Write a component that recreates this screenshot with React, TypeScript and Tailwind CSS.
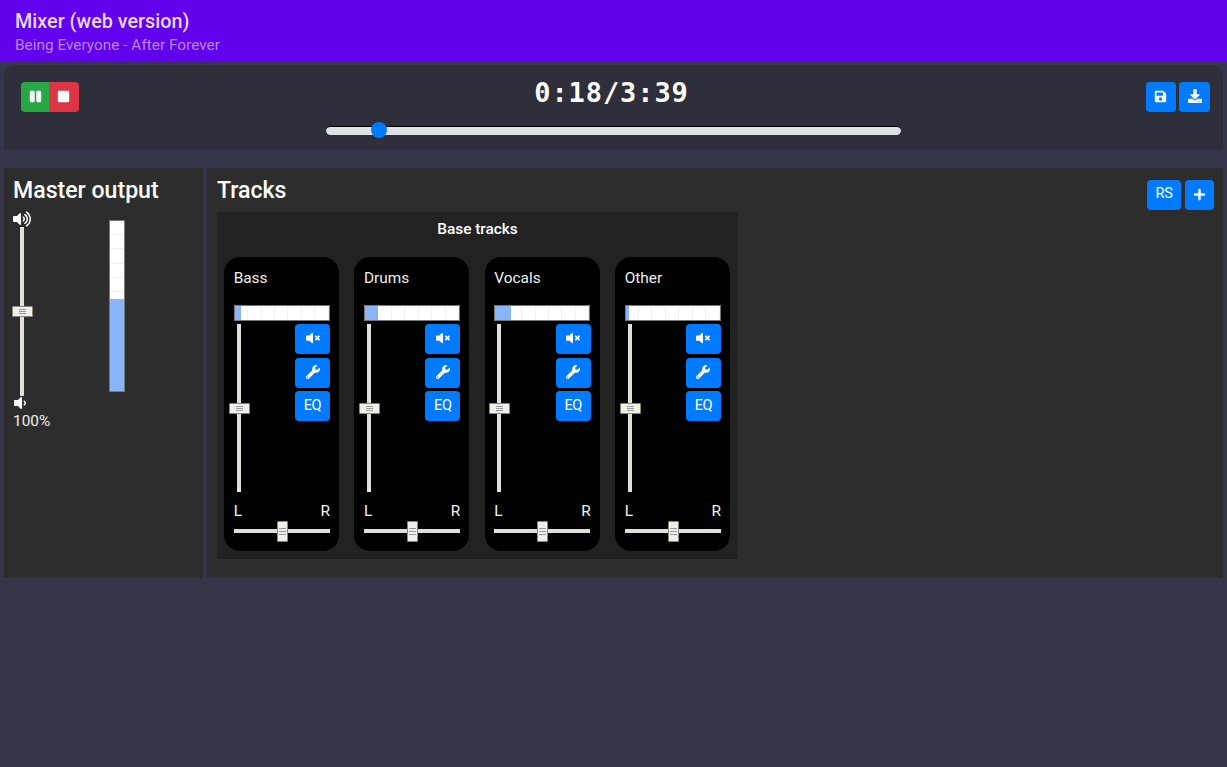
import { FaPause, FaStop, FaSave, FaDownload, FaPlus, FaWrench, FaVolumeMute, FaVolumeUp, FaVolumeDown } from "react-icons/fa";

function Grip({ vertical }: { vertical?: boolean }) {
  return (
    <div className={vertical ? "flex h-full flex-col items-center justify-center gap-[1px]" : "flex h-full flex-col items-center justify-center gap-[2px]"}>
      {[0, 1, 2].map((i) => (
        <span key={i} className="h-px w-[7px] bg-[#999]" />
      ))}
    </div>
  );
}

function Meter({ fill }: { fill: number }) {
  return (
    <div className="relative flex h-[16px] w-[96px] border border-[#777] bg-white">
      {[0, 1, 2, 3, 4, 5, 6].map((i) => (
        <div key={i} className="flex-1 border-r border-[#f0f0f0] last:border-r-0" />
      ))}
      <div className="absolute left-0 top-0 h-full bg-[#8ab4f8]" style={{ width: fill }} />
    </div>
  );
}

function IconBtn({ children }: { children: React.ReactNode }) {
  return (
    <button className="flex h-[30px] w-[35px] items-center justify-center rounded-[4px] bg-[#007bff] pb-[2px] text-[14px] text-white">
      {children}
    </button>
  );
}

function Channel({ name, fill }: { name: string; fill: number }) {
  return (
    <div className="flex h-[294px] w-[115px] flex-col rounded-[16px] bg-black pl-[9.67px] pr-[9px] pt-[10px] text-white">
      <div className="h-[38px] text-[15.4px] leading-[22px] text-[#f0f0f0]">{name}</div>
      <Meter fill={fill} />
      <div className="mt-[3px] flex h-[169px] justify-between">
        <div className="relative ml-[3px] h-[168px] w-[4px] bg-[#e2dfd8]">
          <div className="absolute left-[-8px] top-[79px] h-[11px] w-[21px] rounded-[1px] border border-[#8a8578] bg-[#f0eee8]">
            <Grip vertical />
          </div>
        </div>
        <div className="flex w-[35px] flex-col gap-[3.5px]">
          <IconBtn><FaVolumeMute className="text-[14px]" /></IconBtn>
          <IconBtn><FaWrench className="text-[14px]" /></IconBtn>
          <IconBtn><span className="text-[14.6px] leading-[16px] tracking-[-0.4px]">EQ</span></IconBtn>
        </div>
      </div>
      <div className="mt-[7px] flex h-[22px] justify-between text-[15.4px] leading-[22px] text-[#f4f4f4]">
        <span>L</span>
        <span>R</span>
      </div>
      <div className="relative mt-[7px] h-[4px] w-[96px] bg-[#e2dfd8]">
        <div className="absolute left-[43px] top-[-8px] h-[21px] w-[11px] rounded-[1px] border border-[#8a8578] bg-[#f0eee8]">
          <Grip />
        </div>
      </div>
    </div>
  );
}

export default function App() {
  return (
    <div className="min-h-[767px] bg-[#35364a] font-['Roboto',sans-serif] text-white">
      <header className="h-[62px] bg-[#6200ee] px-[15px] pt-[9px]">
        <div className="text-[19.8px] font-medium leading-[26px] text-[#e8d8ff]">Mixer (web version)</div>
        <div className="text-[15.4px] leading-[20px] text-[#bb86fc]">Being Everyone - After Forever</div>
      </header>

      <section className="mx-[4px] mt-[3px] flex h-[85px] items-start justify-between rounded-t-[12px] bg-[#2e2f3b] pl-[17px] pr-[13px] pt-[17px]">
        <div className="flex h-[30px] w-[58px] overflow-hidden rounded-[4px]">
          <button className="flex w-[28px] items-center justify-center bg-[#28a745] pb-[2px] text-[13px] text-white"><FaPause /></button>
          <button className="flex w-[30px] items-center justify-center bg-[#dc3545] pb-[2px] pr-[1px] text-[13px] text-white"><FaStop /></button>
        </div>
        <div className="flex flex-1 flex-col items-center">
          <div className="ml-[-2px] mt-[-5px] h-[30px] font-['DejaVu_Sans_Mono',monospace] text-[27px] font-bold leading-[32px] tracking-[0.9px] text-white">0:18/3:39</div>
          <div className="relative ml-[1px] mt-[19px] h-[9px] w-[575px] rounded-full border-t border-black bg-[#dee2e6]">
            <div className="absolute left-[45px] top-[-5px] h-[16px] w-[16px] rounded-full bg-[#007bff]" />
          </div>
        </div>
        <div className="flex gap-[3px]">
          <button className="flex h-[30px] w-[30px] items-center justify-center rounded-[4px] bg-[#007bff] pb-[2px] pr-[1px] text-[13px] text-white"><FaSave /></button>
          <button className="flex h-[30px] w-[31px] items-center justify-center rounded-[4px] bg-[#007bff] pb-[2px] text-[14px] text-white"><FaDownload /></button>
        </div>
      </section>

      <main className="mx-[4px] mt-[18px] flex h-[410px] gap-[4px]">
        <section className="w-[199px] bg-[#2d2d2d] px-[9px] pt-[8px]">
          <h2 className="text-[23.1px] font-medium leading-[30px] text-white">Master output</h2>
          <div className="flex">
            <div className="flex w-[96px] flex-col">
              <FaVolumeUp className="mt-[4px] h-[18px] w-[18px] text-white" />
              <div className="relative ml-[7px] mt-[-1px] h-[169px] w-[4px] bg-[#e2dfd8]">
                <div className="absolute left-[-8px] top-[79px] h-[11px] w-[21px] rounded-[1px] border border-[#8a8578] bg-[#f0eee8]">
                  <Grip vertical />
                </div>
              </div>
              <FaVolumeDown className="mt-[-1px] h-[16px] w-[14px] text-white" />
              <div className="text-[15.4px] leading-[20px] text-[#f0f0f0]">100%</div>
            </div>
            <div className="relative mt-[14px] flex h-[172px] w-[16px] flex-col border border-[#777] bg-white">
              {[0, 1, 2, 3, 4, 5, 6, 7, 8, 9, 10, 11].map((i) => (
                <div key={i} className="flex-1 border-b border-[#f0f0f0]" />
              ))}
              <div className="absolute bottom-0 left-0 h-[92px] w-full bg-[#8ab4f8]" />
            </div>
          </div>
        </section>

        <section className="flex-1 bg-[#2d2d2d] px-[10px] pt-[8px]">
          <div className="flex items-start justify-between">
            <h2 className="text-[23.1px] font-medium leading-[30px] text-white">Tracks</h2>
            <div className="mr-[-1px] mt-[4px] flex gap-[4px]">
              <button className="flex h-[30px] w-[34px] items-center justify-center rounded-[4px] bg-[#007bff] pb-[2px] text-[14.6px] tracking-[-0.4px] text-white">RS</button>
              <button className="flex h-[30px] w-[29px] items-center justify-center rounded-[4px] bg-[#007bff] pb-[2px] text-[13px] text-white"><FaPlus /></button>
            </div>
          </div>
          <div className="mt-[2px] h-[347px] w-[521px] bg-[#222] px-[7px] pt-[6px]">
            <div className="text-center text-[15.4px] font-medium leading-[22px] text-white">Base tracks</div>
            <div className="mt-[17px] flex gap-[15.33px]">
              <Channel name="Bass" fill={6} />
              <Channel name="Drums" fill={13} />
              <Channel name="Vocals" fill={16} />
              <Channel name="Other" fill={3} />
            </div>
          </div>
        </section>
      </main>
    </div>
  );
}
